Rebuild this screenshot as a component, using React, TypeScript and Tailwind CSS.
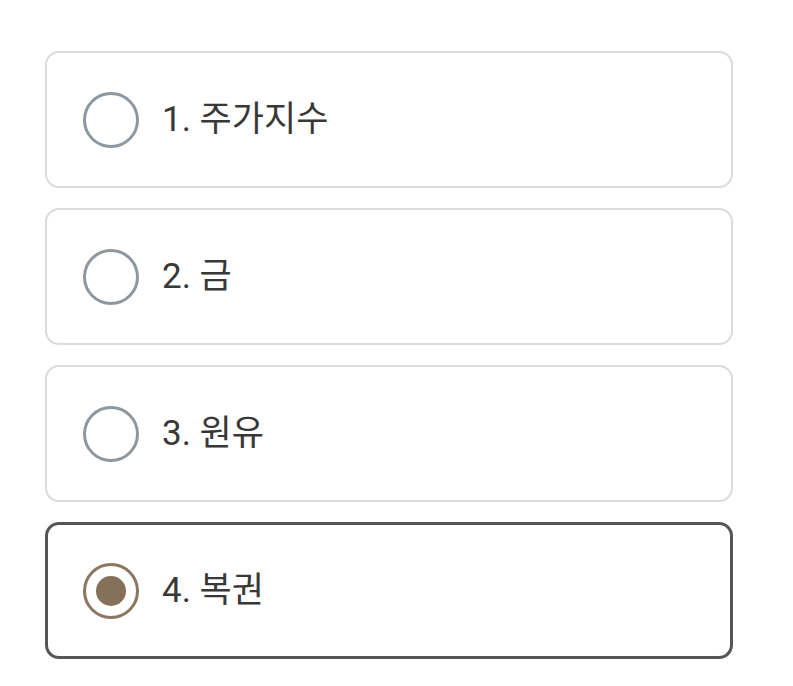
import React from "react";

const options = [
  { label: "1. 주가지수", selected: false },
  { label: "2. 금", selected: false },
  { label: "3. 원유", selected: false },
  { label: "4. 복권", selected: true },
];

export default function App() {
  return (
    <div className="w-[793px] h-[686px] bg-white overflow-hidden" style={{ fontFamily: 'Roboto, "Noto Sans CJK KR", sans-serif' }}>
      <div className="pt-[51px] pl-[45px] flex flex-col gap-[20px] w-[733px]">
        {options.map((o) => (
          <div
            key={o.label}
            className={
              o.selected
                ? "h-[137px] rounded-[14px] border-[3px] border-[#54575a] bg-white flex items-center pl-[35px]"
                : "h-[137px] rounded-[14px] border-2 border-[#dadbdc] bg-white flex items-center pl-[36px]"
            }
          >
            {o.selected ? (
              <div className="w-[56px] h-[56px] rounded-full border-[3px] border-[#8b7660] flex items-center justify-center">
                <div className="w-[30px] h-[30px] rounded-full bg-[#85705a]" />
              </div>
            ) : (
              <div className="w-[56px] h-[56px] rounded-full border-[3px] border-[#8e979e]" />
            )}
            <span className="ml-[23px] text-[35px] leading-none text-[#383838]">{o.label}</span>
          </div>
        ))}
      </div>
    </div>
  );
}
